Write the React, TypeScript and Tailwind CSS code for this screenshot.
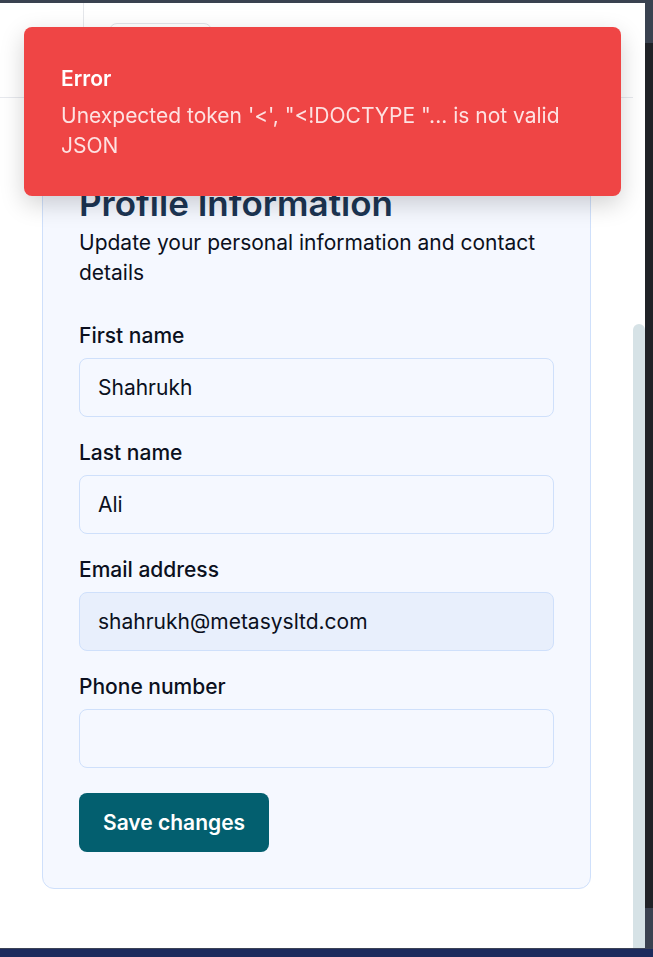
import React from "react";

type Field = { label: string; value: string; readOnly?: boolean };

const fields: Field[] = [
  { label: "First name", value: "Shahrukh" },
  { label: "Last name", value: "Ali" },
  { label: "Email address", value: "shahrukh@metasysltd.com", readOnly: true },
  { label: "Phone number", value: "" },
];

export default function App() {
  return (
    <div
      className="flex h-[957px] w-[653px] flex-col overflow-hidden bg-[#23262c]"
      style={{ fontFamily: "Inter, 'Noto Sans', sans-serif" }}
    >
      <div className="h-[3px] bg-[#3a4250]" />
      <div className="flex flex-1">
        <div className="flex w-[645px] bg-white">
          <main className="flex w-[633px] flex-col">
            <header className="flex h-[95px] border-b border-[#e7e9ee]">
              <div className="w-[84px] border-r border-[#e5e7eb]" />
              <div className="ml-[25px] mt-[20px] h-[40px] w-[103px] rounded-lg border border-[#e2e5ea] bg-white" />
            </header>
            <section className="mx-[42px] mt-[48px] rounded-xl border border-[#cfe0fb] bg-[#f5f8ff] p-9">
              <h2 className="text-[35px] font-semibold leading-[40px] text-[#1c3553]">
                Profile Information
              </h2>
              <p className="mt-[5px] text-[21px] leading-[30px] text-[#0b1020]">
                Update your personal information and contact details
              </p>
              <div className="mt-[34px] flex flex-col gap-[22px]">
                {fields.map((f) => (
                  <div key={f.label}>
                    <label className="block text-[21px] font-medium leading-7 text-[#0b1020]">
                      {f.label}
                    </label>
                    <input
                      readOnly
                      value={f.value}
                      className={
                        f.readOnly
                          ? "mt-2 block h-[59px] w-full rounded-lg border border-[#cfe0fb] bg-[#e8effc] px-[18px] text-[21px] text-[#0b1020] outline-none"
                          : "mt-2 block h-[59px] w-full rounded-lg border border-[#cfe0fb] bg-[#f5f8ff] px-[18px] text-[21px] text-[#0b1020] outline-none"
                      }
                    />
                  </div>
                ))}
              </div>
              <button
                type="button"
                className="mt-[25px] h-[59px] rounded-lg bg-[#035f6f] px-6 text-[21px] font-semibold text-white"
              >
                Save changes
              </button>
            </section>
          </main>
          <div className="flex w-[12px] flex-col">
            <div className="h-[321px]" />
            <div className="flex-1 rounded-t-full bg-[#d6e2e6]" />
          </div>
        </div>
        <div className="flex w-[8px] flex-col">
          <div className="h-[40px] bg-[#3a4250]" />
          <div className="flex-1 bg-[#202227]" />
          <div className="h-[40px] bg-[#3a4150]" />
        </div>
      </div>
      <div className="h-[9px] border-t border-[#3b4256] bg-[#1c2a5c]" />

      <div className="fixed left-[24px] top-[27px] h-[169px] w-[597px] rounded-lg bg-[#ef4545] px-[37px] pt-[38px] shadow-[0_8px_24px_rgba(0,0,0,0.18)]">
        <p className="text-[21px] font-semibold leading-[28px] text-white">Error</p>
        <p className="mt-[8px] text-[21px] leading-[30px] text-[#fde2e2]">
          Unexpected token '&lt;', "&lt;!DOCTYPE "... is not valid JSON
        </p>
      </div>
    </div>
  );
}
